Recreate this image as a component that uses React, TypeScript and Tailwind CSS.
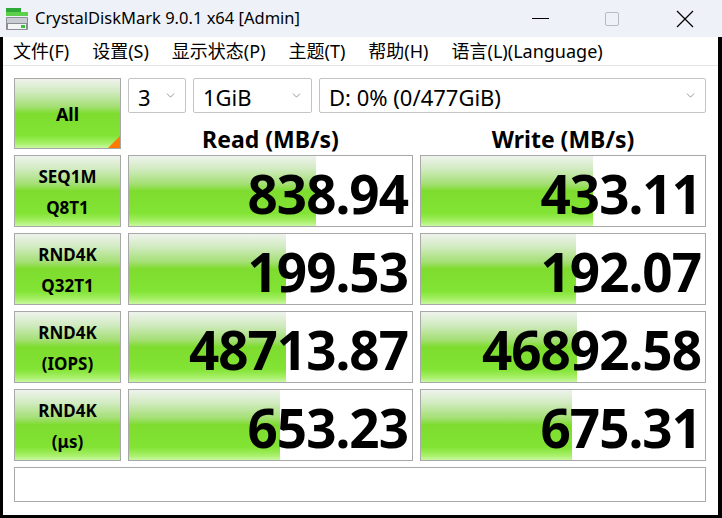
import { ChevronDown } from 'lucide-react'

const green =
  "bg-[linear-gradient(180deg,#eef3ec_0%,#d2ebc2_18%,#a4df74_40%,#7edc2e_50%,#82e434_82%,#a6ef66_93%,#c8f8a0_100%)]"

const results = [
  { l1: 'SEQ1M', l2: 'Q8T1', read: '838.94', rw: 187, write: '433.11', ww: 172 },
  { l1: 'RND4K', l2: 'Q32T1', read: '199.53', rw: 157, write: '192.07', ww: 155 },
  { l1: 'RND4K', l2: '(IOPS)', read: '48713.87', rw: 157, write: '46892.58', ww: 156 },
  { l1: 'RND4K', l2: '(μs)', read: '653.23', rw: 151, write: '675.31', ww: 151 },
]

const menu = ['文件(F)', '设置(S)', '显示状态(P)', '主题(T)', '帮助(H)', '语言(L)(Language)']

function AppIcon() {
  return (
    <svg width="24" height="24" viewBox="0 0 24 24">
      <rect x="1" y="1" width="15" height="4" fill="#2fa83a" />
      <rect x="1" y="5" width="22" height="4" fill="#5cd04a" />
      <rect x="1" y="10" width="22" height="13" rx="1" fill="#8a8f96" />
      <rect x="2" y="11" width="20" height="5" fill="#c9cdd2" />
      <rect x="3" y="17" width="18" height="5" fill="#f4f5f6" />
      <rect x="16" y="18" width="4" height="3" fill="#3cc040" />
    </svg>
  )
}

function Combo({ text, className }: { text: string; className: string }) {
  return (
    <div className={`flex items-center justify-between border border-[#c4c4c4] rounded-[2px] bg-white pl-[9px] pr-[8px] ${className}`}>
      <span className="text-[22px] leading-none text-black pt-[3px]">{text}</span>
      <ChevronDown className="h-[13px] w-[13px] text-[#808080]" strokeWidth={1.5} />
    </div>
  )
}

function Value({ text, width }: { text: string; width: number }) {
  return (
    <div className="relative border border-[#a8a8a8] bg-white">
      <div className={`absolute left-0 top-0 bottom-0 ${green}`} style={{ width }} />
      <div className="relative h-full flex items-center justify-end pr-[4px] pt-[5px] text-[53px] font-bold tracking-[-1px] leading-none text-black">
        {text}
      </div>
    </div>
  )
}

export default function App() {
  return (
    <div className="w-[722px] h-[518px] bg-black flex flex-col font-['Noto_Sans','Noto_Sans_CJK_SC',sans-serif] overflow-hidden">
      {/* Title bar */}
      <div className="h-[37px] bg-[#eef2f8] flex items-center shrink-0">
        <div className="pl-[5px] pr-[6px] pt-[1px]">
          <AppIcon />
        </div>
        <div className="text-[16.5px] text-black flex-1">CrystalDiskMark 9.0.1 x64 [Admin]</div>
        <div className="flex items-center">
          <div className="w-[72px] flex justify-center">
            <div className="w-[17px] h-[1px] bg-black" />
          </div>
          <div className="w-[72px] flex justify-center">
            <div className="w-[14px] h-[14px] border border-[#b8bcc2] rounded-[2px]" />
          </div>
          <div className="w-[74px] flex justify-center">
            <svg width="18" height="18" viewBox="0 0 18 18">
              <path d="M1 1 L17 17 M17 1 L1 17" stroke="#000" strokeWidth="1.2" />
            </svg>
          </div>
        </div>
      </div>

      {/* Client area */}
      <div className="flex-1 bg-white ml-[3px] mr-[4px] mb-[3px] flex flex-col">
        <div className="h-[29px] flex items-center gap-[23px] pl-[10px] text-[18px] text-black border-b border-[#e4e4e4]">
          {menu.map((m) => (
            <span key={m}>{m}</span>
          ))}
        </div>

        <div className="pl-[11px] pt-[12px] grid grid-cols-[107px_285px_286px] grid-rows-[35px_30px_72px_72px_72px_72px_35px] gap-x-[7px] gap-y-[6px]">
          <div className={`relative row-span-2 border border-[#a8a8a8] ${green} flex items-center justify-center`}>
            <span className="text-[18px] font-bold text-black pt-[2px]">All</span>
            <svg className="absolute right-0 bottom-0" width="12" height="12" viewBox="0 0 12 12">
              <polygon points="12,0 12,12 0,12" fill="#ff7a00" />
            </svg>
          </div>

          <div className="col-span-2 flex gap-[7px]">
            <Combo text="3" className="w-[58px]" />
            <Combo text="1GiB" className="w-[119px]" />
            <Combo text="D: 0% (0/477GiB)" className="flex-1" />
          </div>

          <div className="flex items-end justify-center text-[23px] font-bold leading-none text-black translate-y-[2px]">Read (MB/s)</div>
          <div className="flex items-end justify-center text-[23px] font-bold leading-none text-black translate-y-[2px]">Write (MB/s)</div>

          {results.map((r, i) => (
            <div key={i} className="contents">
              <div className={`border border-[#a8a8a8] ${green} flex flex-col items-center justify-center pt-[2px] text-[17px] font-bold leading-[31px] text-black`}>
                <span>{r.l1}</span>
                <span>{r.l2}</span>
              </div>
              <Value text={r.read} width={r.rw} />
              <Value text={r.write} width={r.ww} />
            </div>
          ))}

          <div className="col-span-3 border border-[#a8a8a8] bg-white" />
        </div>
      </div>
    </div>
  )
}
